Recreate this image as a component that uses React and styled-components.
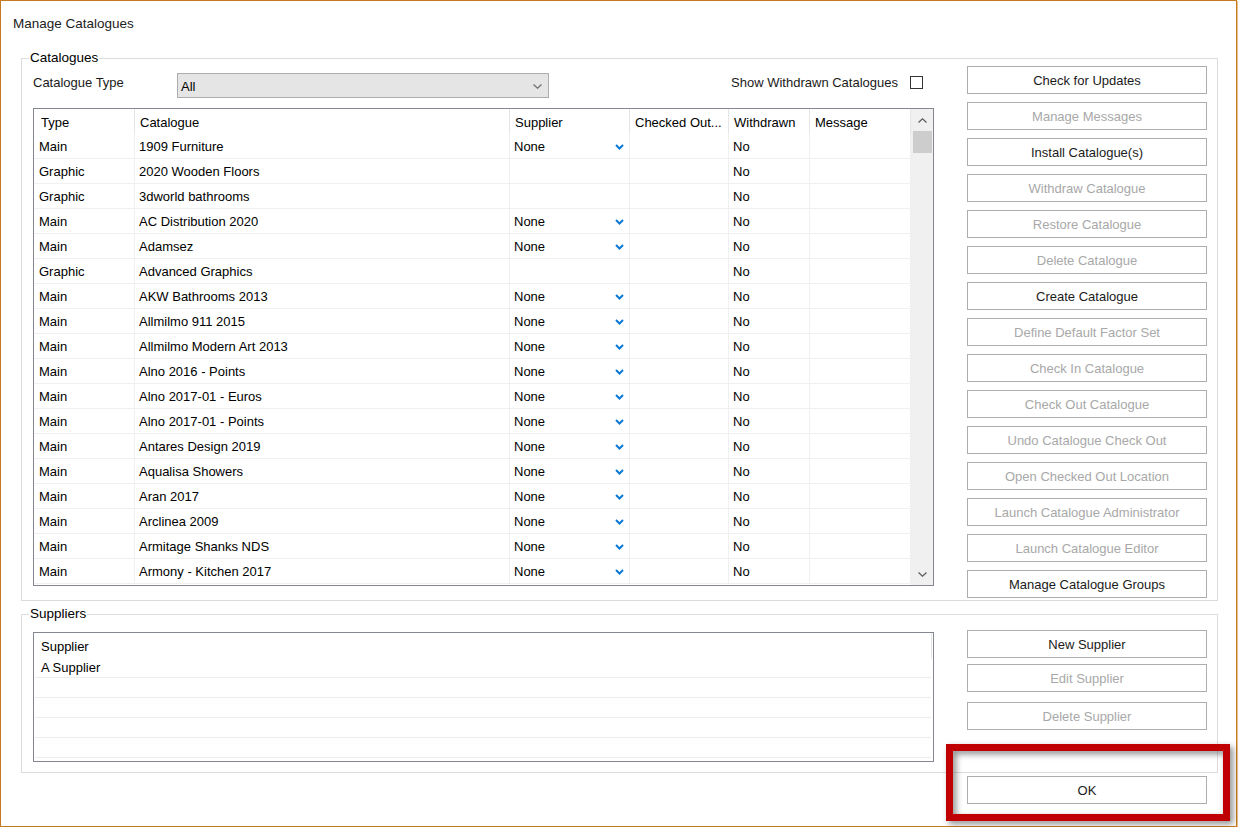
import React from 'react';
import styled, { createGlobalStyle } from 'styled-components';

const GlobalStyle = createGlobalStyle`
  html, body {
    margin: 0;
    padding: 0;
    background: #ffffff;
  }
  body {
    font-family: "Liberation Sans", Arial, sans-serif;
    color: #000;
  }
`;

const Window = styled.div`
  position: relative;
  box-sizing: border-box;
  width: 1237px;
  height: 827px;
  border: 1px solid #c47b20;
  box-shadow: 1px 1px 0 #e9c08a;
  background: #fff;
  display: flex;
  flex-direction: column;
`;

const Title = styled.div`
  margin: 15px 0 0 12px;
  font-size: 13.5px;
  line-height: 16px;
  color: #222;
`;

const Body = styled.div`
  margin-top: -1px;
  padding: 0 18px 0 20px;
  display: flex;
  flex-direction: column;
`;

const Group = styled.fieldset`
  margin: ${(p) => p.$top}px 0 0 0;
  padding: 0 10px ${(p) => p.$bottom}px 11px;
  border: 1px solid #dcdcdc;
  min-width: 0;
  display: flex;
  align-items: flex-start;
`;

const Legend = styled.legend`
  margin-left: -4px;
  padding: 0 1px;
  font-size: 13.5px;
  line-height: 16px;
  color: #000;
`;

const LeftCol = styled.div`
  width: 901px;
  display: flex;
  flex-direction: column;
`;

const ButtonCol = styled.div`
  width: 240px;
  margin-left: 33px;
  display: flex;
  flex-direction: column;
  gap: ${(p) => p.$gap ?? 8}px;
`;

const Button = styled.button`
  box-sizing: border-box;
  height: 28px;
  width: 240px;
  margin: 0;
  margin-top: ${(p) => p.$mt || 0}px;
  padding: 0;
  border: 1px solid #adadad;
  background: #fff;
  font-family: "Liberation Sans", Arial, sans-serif;
  font-size: 13px;
  color: #1a1a1a;
  &:disabled {
    color: #a8a8a8;
  }
`;

const TopRow = styled.div`
  margin-top: 7px;
  height: 25px;
  display: flex;
  align-items: flex-start;
`;

const Label = styled.span`
  margin-top: 2px;
  width: ${(p) => (p.$w ? `${p.$w}px` : 'auto')};
  font-size: 13px;
  line-height: 16px;
  color: #1a1a1a;
`;

const Combo = styled.div`
  box-sizing: border-box;
  width: 372px;
  height: 25px;
  border: 1px solid #adadad;
  background: #e5e5e5;
  display: flex;
  align-items: center;
  justify-content: space-between;
  padding: 2px 6px 0 3px;
  font-size: 13px;
`;

const Spacer = styled.div`
  flex: 1;
`;

const CheckBox = styled.span`
  box-sizing: border-box;
  width: 13px;
  height: 13px;
  margin: 3px 11px 0 12px;
  border: 1px solid #333;
  background: #fff;
`;

const Grid = styled.div`
  box-sizing: border-box;
  margin-top: 10px;
  height: 478px;
  border: 1px solid #828790;
  display: flex;
  overflow: hidden;
`;

const Rows = styled.div`
  display: grid;
  grid-template-columns: 101px 375px 120px 99px 81px 101px;
  grid-auto-rows: 25px;
  align-content: start;
`;

const HeadCell = styled.div`
  box-sizing: border-box;
  padding-left: ${(p) => p.$pl || 6}px;
  border-right: 1px solid #e5e5e5;
  display: flex;
  align-items: center;
  padding-top: 1px;
  font-size: 13px;
  white-space: nowrap;
  overflow: hidden;
`;

const Cell = styled.div`
  box-sizing: border-box;
  padding: 1px 5px 0 ${(p) => p.$pl || 6}px;
  border-right: 1px solid #f0f0f0;
  border-bottom: 1px solid #f0f0f0;
  display: flex;
  align-items: center;
  justify-content: space-between;
  font-size: 13px;
  white-space: nowrap;
`;

const ScrollBar = styled.div`
  width: 22px;
  background: #f0f0f0;
  display: flex;
  flex-direction: column;
  align-items: center;
`;

const Arrow = styled.div`
  height: 22px;
  width: 22px;
  display: flex;
  align-items: center;
  justify-content: center;
`;

const Thumb = styled.div`
  width: 19px;
  height: 22px;
  background: #cdcdcd;
`;

const SupplierList = styled.div`
  box-sizing: border-box;
  margin-top: 10px;
  height: 130px;
  border: 1px solid #828790;
  display: flex;
  flex-direction: column;
  overflow: hidden;
`;

const ListHead = styled.div`
  flex-shrink: 0;
  height: 25px;
  margin-right: 1px;
  border-right: 1px solid #e5e5e5;
  padding: 2px 0 0 7px;
  box-sizing: border-box;
  display: flex;
  align-items: center;
  font-size: 13px;
`;

const ListRow = styled.div`
  box-sizing: border-box;
  height: ${(p) => p.$h || 20}px;
  flex-shrink: 0;
  margin: 0 2px 0 1px;
  border-bottom: 1px solid #ececec;
  padding-left: 6px;
  display: flex;
  align-items: center;
  font-size: 13px;
`;

const Footer = styled.div`
  margin-top: 3px;
  padding-right: 11px;
  display: flex;
  justify-content: flex-end;
`;

const Highlight = styled.div`
  position: absolute;
  left: 945px;
  top: 743px;
  width: 284px;
  height: 77px;
  box-sizing: border-box;
  border: 7px solid #c00000;
  filter: drop-shadow(3px 3px 3px rgba(0, 0, 0, 0.45));
  pointer-events: none;
`;

const BlueChevron = () => (
  <svg width="9" height="6" viewBox="0 0 9 6">
    <polyline points="1,1 4.5,4.5 8,1" fill="none" stroke="#0a78d6" strokeWidth="2" />
  </svg>
);

const GrayChevron = ({ up, color = '#606060', w = 9, h = 5 }) => (
  <svg width={w} height={h} viewBox="0 0 9 5">
    <polyline
      points={up ? '0.5,4.5 4.5,0.8 8.5,4.5' : '0.5,0.5 4.5,4.2 8.5,0.5'}
      fill="none"
      stroke={color}
      strokeWidth="1.3"
    />
  </svg>
);

const catalogues = [
  ['Main', '1909 Furniture', true],
  ['Graphic', '2020 Wooden Floors', false],
  ['Graphic', '3dworld bathrooms', false],
  ['Main', 'AC Distribution 2020', true],
  ['Main', 'Adamsez', true],
  ['Graphic', 'Advanced Graphics', false],
  ['Main', 'AKW Bathrooms 2013', true],
  ['Main', 'Allmilmo 911 2015', true],
  ['Main', 'Allmilmo Modern Art 2013', true],
  ['Main', 'Alno 2016 - Points', true],
  ['Main', 'Alno 2017-01 - Euros', true],
  ['Main', 'Alno 2017-01 - Points', true],
  ['Main', 'Antares Design 2019', true],
  ['Main', 'Aqualisa Showers', true],
  ['Main', 'Aran 2017', true],
  ['Main', 'Arclinea 2009', true],
  ['Main', 'Armitage Shanks NDS', true],
  ['Main', 'Armony - Kitchen 2017', true],
];

const actions = [
  ['Check for Updates', true],
  ['Manage Messages', false],
  ['Install Catalogue(s)', true],
  ['Withdraw Catalogue', false],
  ['Restore Catalogue', false],
  ['Delete Catalogue', false],
  ['Create Catalogue', true],
  ['Define Default Factor Set', false],
  ['Check In Catalogue', false],
  ['Check Out Catalogue', false],
  ['Undo Catalogue Check Out', false],
  ['Open Checked Out Location', false],
  ['Launch Catalogue Administrator', false],
  ['Launch Catalogue Editor', false],
  ['Manage Catalogue Groups', true],
];

const headers = ['Type', 'Catalogue', 'Supplier', 'Checked Out...', 'Withdrawn', 'Message'];

const App = () => {
  return (
    <>
      <GlobalStyle />
      <Window>
        <Title>Manage Catalogues</Title>
        <Body>
          <Group $top={19} $bottom={2}>
            <Legend>Catalogues</Legend>
            <LeftCol>
              <TopRow>
                <Label $w={144}>Catalogue Type</Label>
                <Combo>
                  <span>All</span>
                  <GrayChevron w={9} h={5} color="#707070" />
                </Combo>
                <Spacer />
                <Label>Show Withdrawn Catalogues</Label>
                <CheckBox />
              </TopRow>
              <Grid>
                <Rows>
                  {headers.map((h, i) => (
                    <HeadCell key={h} $pl={i === 0 ? 7 : 5}>
                      {h}
                    </HeadCell>
                  ))}
                  {catalogues.map(([type, name, sup]) => (
                    <React.Fragment key={name}>
                      <Cell $pl={5}>{type}</Cell>
                      <Cell $pl={4}>{name}</Cell>
                      <Cell $pl={4}>
                        {sup && (
                          <>
                            <span>None</span>
                            <BlueChevron />
                          </>
                        )}
                      </Cell>
                      <Cell />
                      <Cell $pl={4}>No</Cell>
                      <Cell />
                    </React.Fragment>
                  ))}
                </Rows>
                <ScrollBar>
                  <Arrow>
                    <GrayChevron up />
                  </Arrow>
                  <Thumb />
                  <Spacer />
                  <Arrow>
                    <GrayChevron />
                  </Arrow>
                </ScrollBar>
              </Grid>
            </LeftCol>
            <ButtonCol>
              {actions.map(([label, enabled]) => (
                <Button key={label} disabled={!enabled}>
                  {label}
                </Button>
              ))}
            </ButtonCol>
          </Group>
          <Group $top={5} $bottom={10}>
            <Legend>Suppliers</Legend>
            <LeftCol>
              <SupplierList>
                <ListHead>Supplier</ListHead>
                <ListRow $h={20}>A Supplier</ListRow>
                <ListRow />
                <ListRow />
                <ListRow />
                <ListRow />
                <ListRow />
              </SupplierList>
            </LeftCol>
            <ButtonCol $gap={0}>
              <Button $mt={8}>New Supplier</Button>
              <Button $mt={6} disabled>
                Edit Supplier
              </Button>
              <Button $mt={10} disabled>
                Delete Supplier
              </Button>
            </ButtonCol>
          </Group>
          <Footer>
            <Button>OK</Button>
          </Footer>
        </Body>
        <Highlight />
      </Window>
    </>
  );
};

export default App;
